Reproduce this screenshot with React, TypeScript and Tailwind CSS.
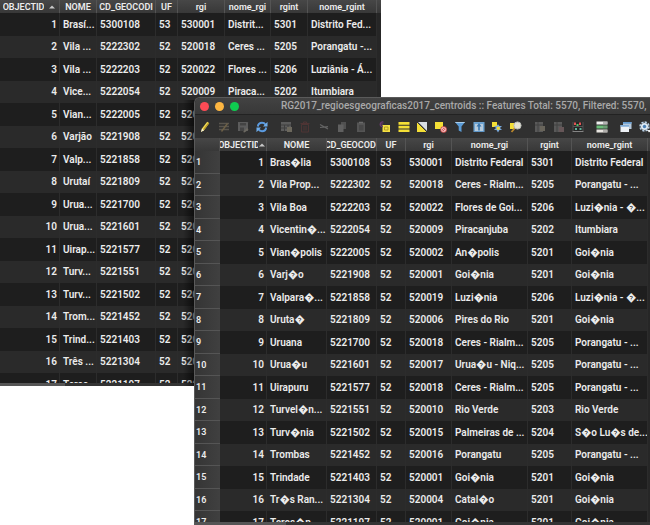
import React from "react";

type Row = [string, string, string, string, string, string, string, string];

const plain: Row[] = [
  ["1", "Brasí...", "5300108", "53", "530001", "Distrit...", "5301", "Distrito Fed..."],
  ["2", "Vila ...", "5222302", "52", "520018", "Ceres ...", "5205", "Porangatu -..."],
  ["3", "Vila ...", "5222203", "52", "520022", "Flores ...", "5206", "Luziânia - Á..."],
  ["4", "Vice...", "5222054", "52", "520009", "Piraca...", "5202", "Itumbiara"],
  ["5", "Vian...", "5222005", "52", "520002", "Anápo...", "5201", "Goiânia"],
  ["6", "Varjão", "5221908", "52", "520001", "Goiânia", "5201", "Goiânia"],
  ["7", "Valp...", "5221858", "52", "520019", "Luziân...", "5206", "Luziânia - Á..."],
  ["8", "Urutaí", "5221809", "52", "520006", "Pires ...", "5201", "Goiânia"],
  ["9", "Urua...", "5221700", "52", "520018", "Ceres ...", "5205", "Porangatu -..."],
  ["10", "Urua...", "5221601", "52", "520017", "Uruaç...", "5205", "Porangatu -..."],
  ["11", "Uirap...", "5221577", "52", "520018", "Ceres ...", "5205", "Porangatu -..."],
  ["12", "Turv...", "5221551", "52", "520010", "Rio Ve...", "5203", "Rio Verde"],
  ["13", "Turv...", "5221502", "52", "520015", "Palmei...", "5204", "São Luís de..."],
  ["14", "Trom...", "5221452", "52", "520016", "Poran...", "5205", "Porangatu -..."],
  ["15", "Trind...", "5221403", "52", "520001", "Goiânia", "5201", "Goiânia"],
  ["16", "Três ...", "5221304", "52", "520004", "Catalão", "5201", "Goiânia"],
  ["17", "Teres...", "5221197", "52", "520001", "Goiânia", "5201", "Goiânia"],
];

const broken: Row[] = [
  ["1", "Bras\uFFFDlia", "5300108", "53", "530001", "Distrito Federal", "5301", "Distrito Federal"],
  ["2", "Vila Prop...", "5222302", "52", "520018", "Ceres - Rialm...", "5205", "Porangatu - ..."],
  ["3", "Vila Boa", "5222203", "52", "520022", "Flores de Goi...", "5206", "Luzi\uFFFDnia - \uFFFD..."],
  ["4", "Vicentin\uFFFD...", "5222054", "52", "520009", "Piracanjuba", "5202", "Itumbiara"],
  ["5", "Vian\uFFFDpolis", "5222005", "52", "520002", "An\uFFFDpolis", "5201", "Goi\uFFFDnia"],
  ["6", "Varj\uFFFDo", "5221908", "52", "520001", "Goi\uFFFDnia", "5201", "Goi\uFFFDnia"],
  ["7", "Valpara\uFFFD...", "5221858", "52", "520019", "Luzi\uFFFDnia", "5206", "Luzi\uFFFDnia - \uFFFD..."],
  ["8", "Uruta\uFFFD", "5221809", "52", "520006", "Pires do Rio", "5201", "Goi\uFFFDnia"],
  ["9", "Uruana", "5221700", "52", "520018", "Ceres - Rialm...", "5205", "Porangatu - ..."],
  ["10", "Urua\uFFFDu", "5221601", "52", "520017", "Urua\uFFFDu - Niq...", "5205", "Porangatu - ..."],
  ["11", "Uirapuru", "5221577", "52", "520018", "Ceres - Rialm...", "5205", "Porangatu - ..."],
  ["12", "Turvel\uFFFDn...", "5221551", "52", "520010", "Rio Verde", "5203", "Rio Verde"],
  ["13", "Turv\uFFFDnia", "5221502", "52", "520015", "Palmeiras de ...", "5204", "S\uFFFDo Lu\uFFFDs de..."],
  ["14", "Trombas", "5221452", "52", "520016", "Porangatu", "5205", "Porangatu - ..."],
  ["15", "Trindade", "5221403", "52", "520001", "Goi\uFFFDnia", "5201", "Goi\uFFFDnia"],
  ["16", "Tr\uFFFDs Ran...", "5221304", "52", "520004", "Catal\uFFFDo", "5201", "Goi\uFFFDnia"],
  ["17", "Teres\uFFFDp...", "5221197", "52", "520001", "Goi\uFFFDnia", "5201", "Goi\uFFFDnia"],
];

const names = ["OBJECTID", "NOME", "CD_GEOCODI", "UF", "rgi", "nome_rgi", "rgint", "nome_rgint"];

function SortMark() {
  return (
    <svg className="h-1 w-2 shrink-0" viewBox="0 0 8 4" aria-hidden="true">
      <path d="M1 3.5 4 .5l3 3z" fill="#c8c8c8" />
    </svg>
  );
}

function AttributeTable({ rows, numbered, cols }: { rows: Row[]; numbered?: boolean; cols: string[] }) {
  return (
    <table className="w-full table-fixed border-separate border-spacing-0 text-[10px] font-semibold text-[#ececec]">
      <colgroup>
        {cols.map((c, i) => (
          <col key={i} className={c} />
        ))}
        <col />
      </colgroup>
      <thead>
        <tr className="h-[13px] bg-linear-to-b from-[#474747] to-[#383838]">
          {numbered && <td className="border-r border-[#4c4c4c] p-0" />}
          {names.map((n, i) => (
            <th
              key={n}
              scope="col"
              className="overflow-hidden border-r border-[#545454] p-0 text-[9px] leading-3 font-semibold whitespace-nowrap"
            >
              <div className="flex items-center justify-center overflow-hidden">
                <span className={i === 0 || i === 2 ? "flex min-w-0 justify-center overflow-hidden" : ""}>{n}</span>
                {i === 0 && (
                  <span className={numbered ? "flex shrink-0" : "ml-1 flex shrink-0"}>
                    <SortMark />
                  </span>
                )}
              </div>
            </th>
          ))}
          <td className="p-0" />
        </tr>
      </thead>
      <tbody>
        {rows.map((r) => (
          <tr key={r[0]} className="odd:h-[23px] odd:bg-[#1e1e1e] even:h-[22px] even:bg-[#2a2a2a]">
            {numbered && (
              <th
                scope="row"
                className="border-b border-[#555] bg-linear-to-r from-[#353535] to-[#404040] p-0 pl-px text-left text-[9px] leading-3 font-semibold"
              >
                {r[0]}
              </th>
            )}
            {r.map((v, i) => (
              <td
                key={i}
                className={
                  i === 0
                    ? "border-r border-[#2c2c2c] p-0 pr-0.5 text-right leading-4 whitespace-nowrap"
                    : "overflow-hidden border-r border-[#2c2c2c] p-0 pl-[3px] leading-4 whitespace-nowrap"
                }
              >
                {v}
              </td>
            ))}
            <td className="bg-[#262626] p-0" />
          </tr>
        ))}
      </tbody>
    </table>
  );
}

const backCols = ["w-[60px]", "w-[37px]", "w-[59px]", "w-[22px]", "w-[47px]", "w-[46px]", "w-[37px]", "w-[69px]"];
const frontCols = ["w-[25px]", "w-[47px]", "w-[60px]", "w-[50px]", "w-[29px]", "w-[46px]", "w-[76px]", "w-[44px]", "w-[76px]"];

function Tool({ label, children }: { label: string; children: React.ReactNode }) {
  return (
    <button type="button" aria-label={label} className="block size-3 shrink-0">
      <svg className="size-3" viewBox="0 0 12 12" fill="none" aria-hidden="true">
        {children}
      </svg>
    </button>
  );
}

const group = "flex shrink-0 justify-between";

function Toolbar() {
  return (
    <div role="toolbar" aria-label="Table tools" className="flex h-[23px] shrink-0 items-center gap-3 overflow-hidden bg-[#303030] pl-1">
      <div className={group + " w-[69px]"}>
        <Tool label="Toggle editing">
          <path d="M2 11 3 7.5 8.2.8l2 1.5L5 9.2z" fill="#f3dc55" />
          <path d="M5 9.2 10.2 2.3l-.9-.7L4 8.6z" fill="#b99a26" />
          <path d="M2 11 3 7.5 5 9.2z" fill="#f5f0df" />
        </Tool>
        <Tool label="Multi edit">
          <path d="M1 2.5h10M1 5.5h10M1 8.5h10" stroke="#59554e" strokeWidth="1.4" />
          <path d="m3.5 10.5 6-8" stroke="#6d6047" strokeWidth="1.4" />
        </Tool>
        <Tool label="Save edits">
          <path d="M1 1h9.5l.5.5V10H1z" fill="#5c5c5c" />
          <path d="M3 2h6v2.5H3zM3 6.500h4V10H3z" fill="#444" />
          <path d="m6 11 4-4 1.5 1.5-4 3z" fill="#6c6961" />
        </Tool>
        <Tool label="Reload table">
          <path d="M1.8 5.500C2.200 3 4 1.800 6 1.800c1.600 0 2.800.7 3.600 1.900M10.200 6.500C9.800 9 8 10.200 6 10.200c-1.600 0-2.800-.7-3.600-1.900" stroke="#5b9be0" strokeWidth="2" />
          <path d="M11.500.8v4.700H7zM.5 11.200V6.500H5z" fill="#70aeea" />
        </Tool>
      </div>
      <div className={group + " w-[87px]"}>
        <Tool label="Add feature">
          <path d="M1 1h10v9H1z" fill="#5c5c5c" />
          <path d="M1 4h10M1 7h10M4.500 4v6M8 4v6" stroke="#3e3e3e" />
          <path d="M7 6h5v5H7z" fill="#6c685d" />
        </Tool>
        <Tool label="Delete selected">
          <path d="M2.500 3.500h7V11h-7zM1.500 2.500h9M4.500 2V1h3v1" stroke="#4e3434" />
          <path d="M5 5v4.500M7 5v4.500" stroke="#4e3434" />
        </Tool>
        <Tool label="Cut">
          <path d="m2 3.500 8 4.500M2 6.500l8-.8" stroke="#656565" strokeWidth="1.2" />
        </Tool>
        <Tool label="Copy">
          <path d="M5 1h5v7H5z" fill="#505050" />
          <path d="M2 3.500h5.500V11H2z" fill="#606060" />
        </Tool>
        <Tool label="Paste">
          <path d="M2 1.500h8V11H2z" fill="#555" />
          <path d="M4 4h4.500v5.500H4z" fill="#484848" />
          <path d="M4 .8h4v1.500H4z" fill="#6a6a6a" />
        </Tool>
      </div>
      <div className={group + " w-[143px]"}>
        <Tool label="Select by expression">
          <path d="M3.500 4H11v7H3.500z" fill="#f4df42" />
          <path d="M5.500 6H9v3H5.500z" stroke="#a58d25" strokeWidth=".8" />
          <path d="M4.500 1.200A2.300 2.300 0 1 0 4 5.500M1.200 3h3" stroke="#6d3874" strokeWidth="1.2" />
        </Tool>
        <Tool label="Select all">
          <path d="M.5 1h11v2.700H.5zM.5 4.700h11v2.700H.5zM.5 8.400h11V11H.5z" fill="#f4df36" />
        </Tool>
        <Tool label="Invert selection">
          <path d="M1 1v10h10z" fill="#f4df36" />
          <path d="M2 1h9v9z" fill="#d9dee3" />
          <path d="m1 1 10 10" stroke="#333" strokeWidth="1" />
        </Tool>
        <Tool label="Deselect all">
          <path d="M0 1h8v7H0z" fill="#f4df36" />
          <circle cx="8.600" cy="8.500" r="3.200" fill="#d95757" />
          <circle cx="8.600" cy="8.500" r="2" stroke="#f1caca" />
          <path d="m7.200 7.200 2.800 2.600" stroke="#f1caca" />
        </Tool>
        <Tool label="Filter">
          <path d="M1 1h10L7.500 5.500V11L4.700 9.500v-4z" fill="#5b9bd5" />
          <path d="M1 1h10l-.8 1H1.800z" fill="#aacdea" />
        </Tool>
        <Tool label="Move selection to top">
          <path d="M.5 1h11v10H.5z" fill="#6ea3d0" />
          <path d="M2 3h8v8H2z" fill="#b7cbdc" />
          <path d="M6 2 3.500 5.500h1.700V9.500h1.600V5.500h1.700z" fill="#3775ad" />
          <path d="M1 10.500h10" stroke="#5d94c6" />
        </Tool>
        <Tool label="Pan to rows">
          <path d="M1 1h5v5H1z" fill="#f4df36" />
          <path d="M7 3.200 8.500 5H11l-2 2 2 2H8.500L7 11.500 5.500 9H3l2-2-2-2h2.500z" fill="#77a8dc" />
          <path d="M5.800 5.800h3v3h-3z" fill="#f4df36" />
        </Tool>
        <Tool label="Zoom to rows">
          <path d="M0 2h6v6H0z" fill="#f4df36" />
          <path d="m5 7-3.500 4" stroke="#b8862d" strokeWidth="1.8" />
          <circle cx="7.500" cy="4.500" r="3.600" fill="#e7e5d1" stroke="#b5b7b5" />
        </Tool>
      </div>
      <div className={group + " w-[50px]"}>
        <Tool label="New field">
          <path d="M1 1h8v10H1z" fill="#595959" />
          <path d="M4 1v10M1 4h8" stroke="#424242" />
          <path d="M6 5h5v5H6z" fill="#68645b" />
        </Tool>
        <Tool label="Delete field">
          <path d="M1 1h8v10H1z" fill="#595959" />
          <path d="M4 1v10M1 4h8" stroke="#424242" />
          <path d="M6 6h5v5H6z" fill="#665658" />
        </Tool>
        <Tool label="Field calculator">
          <path d="M.5 1h11v10H.5z" fill="#262626" />
          <path d="M.5 10.500h11" stroke="#858585" />
          <path d="M1 1v9M11 1v9M1 5.500h10" stroke="#555" />
          <path d="M2 1.500h2v2.500H2zM7 1.500h2V4H7z" fill="#e25454" />
          <path d="M4.500 3h2v2h-2z" fill="#53bd68" />
          <path d="M3 7h2v2H3zM7.500 7h2v2h-2z" fill="#5fb39a" />
        </Tool>
      </div>
      <Tool label="Conditional formatting">
        <path d="M.5.500h11v3H.5z" fill="#eeeeee" />
        <path d="M.5 4.500h11v3H.5z" fill="#69bd78" />
        <path d="M.5 8.500h11v3H.5z" fill="#e8e5e0" />
        <path d="M7 2h4M7 6h4M7 10h4" stroke="#777" strokeWidth="1" />
      </Tool>
      <div className={group + " w-[31px]"}>
        <Tool label="Dock table">
          <path d="M3 1h8.500v7H3z" fill="#b6c9dc" />
          <path d="M3 1h8.500v1.800H3z" fill="#659bd0" />
          <path d="M.5 4h8.500v7H.5z" fill="#edf1f5" />
          <path d="M.5 4h8.500v1.800H.5z" fill="#81add8" />
        </Tool>
        <Tool label="Actions">
          <circle cx="5.500" cy="5.500" r="4.400" stroke="#b9d0e6" strokeWidth="1.6" strokeDasharray="2.2 1.2" />
          <circle cx="5.500" cy="5.500" r="3.600" fill="#dce8f3" />
          <circle cx="5.500" cy="5.500" r="1.700" fill="#4a7fb5" />
          <path d="M8 9h4l-2 2.500z" fill="#eee" />
        </Tool>
      </div>
    </div>
  );
}

const light = "block size-[9px] rounded-full";

export default function App() {
  return (
    <main className="relative h-screen overflow-hidden bg-white font-[Roboto,'Liberation_Sans',sans-serif]">
      <section aria-label="Attribute table" className="relative flex h-[386px] w-[381px] flex-col overflow-hidden bg-[#1e1e1e]">
        <div className="min-h-0 flex-1 overflow-hidden">
          <AttributeTable rows={plain} cols={backCols} />
        </div>
        <div className="h-[3px] bg-[#333]">
          <div className="h-full w-[65px] bg-[#555]" />
        </div>
        <div className="absolute top-[100px] bottom-0 left-[183px] w-3 bg-linear-to-r from-transparent to-black/60" />
      </section>
      <section
        aria-label="Centroids attribute table"
        className="absolute inset-x-0 top-[97px] bottom-0 ml-[194px] flex flex-col overflow-hidden rounded-tl-md border-t border-l border-[#5a5a5a] bg-[#1e1e1e]"
      >
        <header className="flex h-[17px] shrink-0 items-center overflow-hidden border-b border-[#222] bg-linear-to-b from-[#424242] to-[#383838] pl-[5px]">
          <div className="flex gap-[6px]">
            <button type="button" aria-label="Close" className={light + " bg-[#fc4b55]"} />
            <button type="button" aria-label="Minimize" className={light + " bg-[#fdb641]"} />
            <button type="button" aria-label="Zoom" className={light + " bg-[#0fcb50]"} />
          </div>
          <h1 className="ml-[42px] text-[10px] leading-4 font-medium whitespace-nowrap text-[#a9a9a9]">
            RG2017_regioesgeograficas2017_centroids :: Features Total: 5570, Filtered: 5570,
          </h1>
        </header>
        <Toolbar />
        <div className="min-h-0 flex-1 overflow-hidden">
          <AttributeTable rows={broken} numbered cols={frontCols} />
        </div>
        <div className="h-[3px] shrink-0 bg-[#333]">
          <div className="h-full w-[91px] bg-[#555]" />
        </div>
      </section>
    </main>
  );
}
